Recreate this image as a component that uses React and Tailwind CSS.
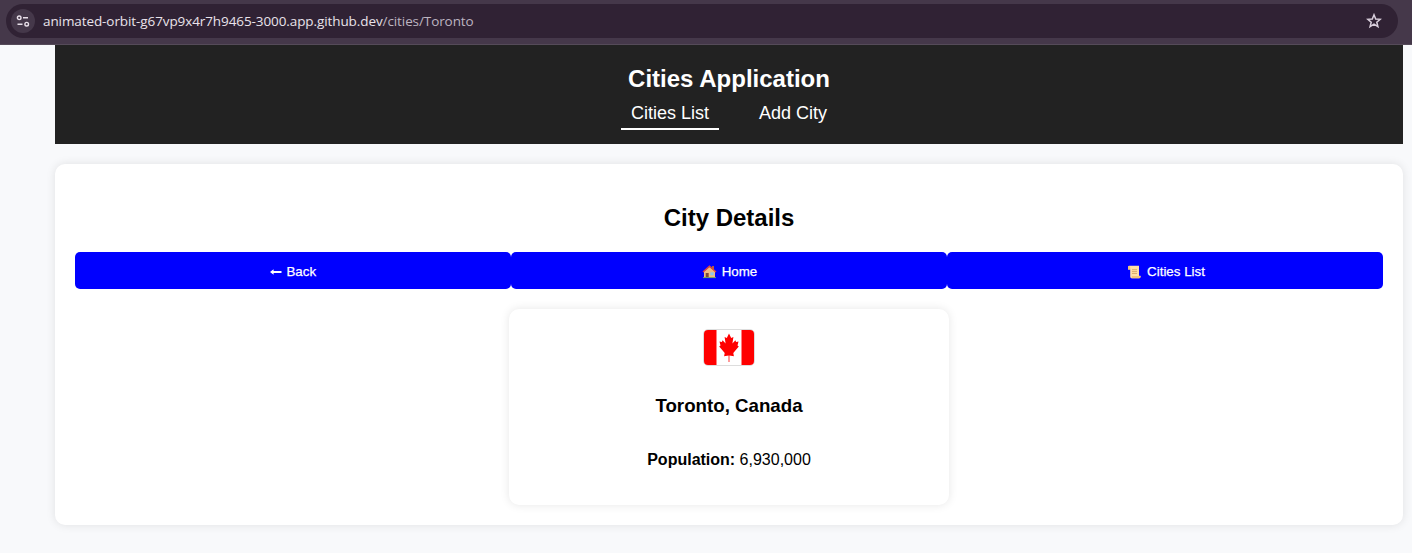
const HomeIcon = () => (
  <svg width="15" height="14" viewBox="0 0 15 14" className="shrink-0">
    <rect x="10" y="1" width="2" height="5" fill="#b45a45" />
    <path d="M2 6.5 7.5 2 13 6.5V13H2Z" fill="#f0bc80" />
    <path d="M1 7 7.5 1.2 14 7" fill="none" stroke="#e0493c" strokeWidth="1.4" />
    <rect x="3.7" y="8" width="3" height="5" fill="#7d4c38" />
    <rect x="8.3" y="7.3" width="3.4" height="3" fill="#8fc5ee" />
    <path d="M1 12.6h13" stroke="#6ba36a" strokeWidth="1" />
  </svg>
);

const ScrollIcon = () => (
  <svg width="15" height="14" viewBox="0 0 15 14" className="shrink-0">
    <path d="M2.3 .8H12V10.8H13.5V12Q13.3 13.3 12 13.3H4.5Q3.2 13 3.2 11.8V4.4H1V2.2Q1.2 .8 2.3 .8Z" fill="#ffdfa6" />
    <path d="M1 4.4V2.3Q1.2 .9 2.2 .9T3.3 2.4V4.4ZM5 11.1H13.5V12Q13.3 13.3 12 13.3H4.5Q5 12.6 5 11.1Z" fill="#f3c27c" />
    <path d="M5 4.7h5M5 6.6h5M5 8.5h5" stroke="#d8a767" strokeWidth=".9" />
  </svg>
);

const BackIcon = () => (
  <svg width="12" height="8" viewBox="0 0 12 8" className="shrink-0">
    <path d="M0 4 3.6 1.3V3.1H11.5V4.9H3.6V6.7Z" fill="#fff" />
  </svg>
);

const Flag = () => (
  <svg width="50" height="35" viewBox="0 0 50 35" className="block">
    <path d="M0 0H12.5V35H0ZM37.5 0H50V35H37.5Z" fill="#f00" />
    <path
      d="M25 3.5 22.8 8 20.6 6.9 21.6 13.4 18.6 10.3 17.9 12 15.5 11.6 16.5 15.5 15.2 16.6 20.7 23 20.1 26.2 24.6 25.4V32H25.4V25.4L29.9 26.2 29.3 23 34.8 16.6 33.5 15.5 34.5 11.6 32.1 12 31.4 10.3 28.4 13.4 29.4 6.9 27.2 8Z"
      fill="#f00"
    />
  </svg>
);

const AddressBar = () => (
  <div className="h-[45px] border-b border-[#554b59] bg-[#45384a] pt-1 pr-[14px] pl-[6px]">
    <div className="flex h-[34px] items-center rounded-full bg-[#302234] pr-[16px] pl-[5px]">
      <div className="flex size-6 items-center justify-center rounded-full bg-[#45384a]">
        <svg width="14" height="14" viewBox="0 0 14 14" fill="none" stroke="#e8dfe9" strokeWidth="1.4">
          <circle cx="3.2" cy="3.8" r="1.8" />
          <path d="M7 3.8h5M1.5 10.2h5" />
          <circle cx="10.7" cy="10.2" r="1.8" />
        </svg>
      </div>
      <div className="ml-2 font-['Open_Sans','Noto_Sans',sans-serif] text-[13.5px] leading-5 tracking-[-0.092px] whitespace-nowrap text-[#e9e2ea]">
        animated-orbit-g67vp9x4r7h9465-3000.app.github.dev<span className="text-[#bdb4c0]">/cities/Toronto</span>
      </div>
      <svg width="16" height="16" viewBox="0 0 16 16" className="ml-auto" fill="none" stroke="#d9cfdc" strokeWidth="1.5">
        <path d="M8 1.8 9.7 6 14.2 6.3 10.8 9.2 11.9 13.6 8 11.2 4.1 13.6 5.2 9.2 1.8 6.3 6.3 6Z" />
      </svg>
    </div>
  </div>
);

const NavButton = ({ icon, children }) => (
  <button className="flex h-[37px] flex-1 items-center justify-center rounded-[5px] bg-[#0000ff] pt-0.5 text-[13.333px] leading-[15px] text-white [-webkit-text-stroke:0.25px_white]">
    {icon}
    {children}
  </button>
);

export default function App() {
  return (
    <div className="h-[553px] overflow-hidden bg-[#f8f9fb] font-['Liberation_Sans',Arial,sans-serif] text-black">
      <AddressBar />
      <div className="mr-[9px] ml-[55px]">
        <header className="flex h-[99px] flex-col items-center bg-[#222] pt-5 text-white">
          <h1 className="text-2xl leading-[28px] font-bold">Cities Application</h1>
          <nav className="mt-[5px] mr-[10px] flex gap-5 pl-[10px] text-lg leading-[21px]">
            <a className="border-b-2 border-white px-[10px] pt-[5px] pb-[4px]">Cities List</a>
            <a className="ml-[10px] px-[10px] pt-[5px] pb-[4px]">Add City</a>
          </nav>
        </header>
        <main className="mt-5 flex h-[361px] flex-col items-center rounded-[10px] bg-white px-5 pt-10 shadow-[0_0_10px_rgba(0,0,0,0.1)]">
          <h2 className="text-2xl leading-[28px] font-bold">City Details</h2>
          <div className="mt-5 flex w-full">
            <NavButton icon={<BackIcon />}>
              <span className="ml-[4.5px]">Back</span>
            </NavButton>
            <NavButton icon={<HomeIcon />}>
              <span className="-mr-px ml-[5px]">Home</span>
            </NavButton>
            <NavButton icon={<ScrollIcon />}>
              <span className="-mr-[2px] ml-[5px]">Cities List</span>
            </NavButton>
          </div>
          <section className="mt-5 flex h-[196px] w-[440px] flex-col items-center rounded-[10px] bg-white pt-5 shadow-[0_0_10px_rgba(0,0,0,0.1)]">
            <div className="overflow-hidden rounded-[5px] border border-[#ddd]">
              <Flag />
            </div>
            <h3 className="mt-[29px] text-[18.72px] leading-[22px] font-bold">Toronto, Canada</h3>
            <p className="mt-[34px] text-base leading-[18px]">
              <strong>Population:</strong> 6,930,000
            </p>
          </section>
        </main>
      </div>
    </div>
  );
}
